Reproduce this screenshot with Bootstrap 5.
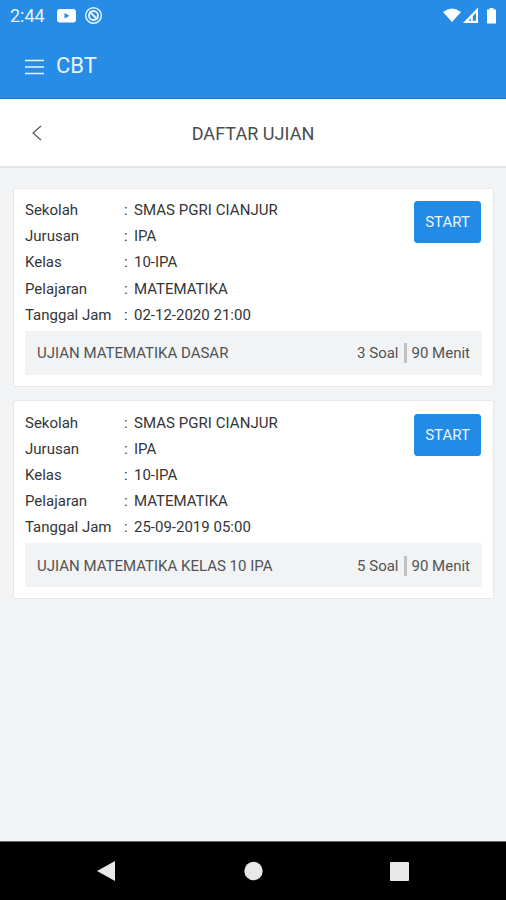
<!DOCTYPE html>
<html lang="id">
<head>
<meta charset="utf-8">
<meta name="viewport" content="width=device-width, initial-scale=1">
<title>CBT</title>
<link href="https://cdn.jsdelivr.net/npm/bootstrap@5.3.0/dist/css/bootstrap.min.css" rel="stylesheet">
<style>
body{font-family:Roboto,"Liberation Sans",sans-serif;font-size:15px;background:#f1f3f5;color:#343538}
svg{display:block;flex:none}
.app-top{background:#268ce6;height:99px;color:#e8f5ff;border-bottom:1px solid #1c78c9}
.status{height:31px;padding:0 8px 0 10px;font-size:18px}
.status-apps{margin-left:12px}
.brand-row{height:69px;padding:0 24px 0;font-size:22px;line-height:1}
.brand-text{margin-left:11px}
.title-bar{height:69px;border-bottom:2px solid #e3e4e5;padding:1px 30px 0}
.title-bar h1{font-size:18px;font-weight:400;color:#4b4c4e;letter-spacing:.05px;padding-top:1px}
.title-end{width:14px}
.exam-list{padding:19.500px 12px 0 13px;gap:13.500px}
.exam{border:1px solid #e6e8ea;border-radius:2px;height:199px;padding:8.500px 11px 0}
.exam-row{height:26.2px;line-height:27.2px}
.exam-label{width:99px}
.exam-sep{width:10px}
.exam-school{letter-spacing:.05px}
.btn-start{--bs-btn-bg:#228be6;--bs-btn-border-color:#228be6;--bs-btn-color:#e9f6ff;--bs-btn-hover-bg:#1c7ed6;--bs-btn-hover-color:#fff;width:67px;height:42px;font-size:15px;padding:1px 0 0;border-radius:3px;margin:4px 1px 0 0}
.exam-foot{height:44px;background:#f1f3f5;padding:1px 12px 0;margin-top:3px;color:#515355}
.bar{width:3px;height:20px;background:#bfc1c3;margin:0 5px}
.sysnav{height:59px;background:#000;border-top:1px solid #666}
</style>
</head>
<body>
<div class="d-flex flex-column vh-100 overflow-hidden">
  <header class="app-top flex-shrink-0">
    <div class="status d-flex align-items-center">
      <span>2:44</span>
      <svg class="ms-auto order-1" width="56" height="20" viewBox="0 0 56 20" fill="#fff"><path d="M1 6Q10-1 19 6L10 16Z"/><path fill-rule="evenodd" d="M21 17L36 1.500V17ZM26.500 14.800H29V12.200ZM30.800 14.800H34V7L30.800 10.300Z"/><path d="M45 3.500h2.500V2h4v1.500H54V17.500h-9z"/></svg>
      <svg class="status-apps" width="48" height="20" viewBox="0 0 48 20"><rect y="3" x="0" width="19" height="13.500" rx="3" fill="#fff"/><path d="M7.500 7v5.500l5-2.750z" fill="#268ce6"/><g fill="none" stroke="#e8f5ff"><circle cx="36.500" cy="9.500" r="7.800" stroke-width="1.500"/><circle cx="36.500" cy="9.500" r="4.500" stroke-width="1.900"/><path d="M32.500 5.500l8 8" stroke-width="2"/></g></svg>
    </div>
    <nav class="brand-row d-flex align-items-center">
      <svg width="21" height="18" viewBox="0 0 21 18" stroke="#e8f5ff" stroke-width="1.700"><path d="M1 3.500h19M1 10h19M1 16.500h19"/></svg>
      <span class="brand-text">CBT</span>
    </nav>
  </header>
  <div class="title-bar bg-white d-flex align-items-center flex-shrink-0">
    <svg width="14" height="18" viewBox="0 0 14 18" fill="none" stroke="#555" stroke-width="1.200"><path d="M11 2L3 9l8 7"/></svg>
    <h1 class="flex-grow-1 text-center mb-0">DAFTAR UJIAN</h1>
    <span class="title-end"></span>
  </div>
  <main class="exam-list d-flex flex-column flex-grow-1">
    <section class="exam bg-white">
      <div class="d-flex justify-content-between align-items-start">
        <div>
          <div class="exam-row d-flex"><span class="exam-label">Sekolah</span><span class="exam-sep">:</span><span class="exam-school">SMAS PGRI CIANJUR</span></div>
          <div class="exam-row d-flex"><span class="exam-label">Jurusan</span><span class="exam-sep">:</span><span>IPA</span></div>
          <div class="exam-row d-flex"><span class="exam-label">Kelas</span><span class="exam-sep">:</span><span>10-IPA</span></div>
          <div class="exam-row d-flex"><span class="exam-label">Pelajaran</span><span class="exam-sep">:</span><span>MATEMATIKA</span></div>
          <div class="exam-row d-flex"><span class="exam-label">Tanggal Jam</span><span class="exam-sep">:</span><span>02-12-2020 21:00</span></div>
        </div>
        <button class="btn btn-start" type="button">START</button>
      </div>
      <div class="exam-foot d-flex align-items-center"><span class="me-auto">UJIAN MATEMATIKA DASAR</span><span>3 Soal</span><span class="bar"></span><span>90 Menit</span></div>
    </section>
    <section class="exam bg-white">
      <div class="d-flex justify-content-between align-items-start">
        <div>
          <div class="exam-row d-flex"><span class="exam-label">Sekolah</span><span class="exam-sep">:</span><span class="exam-school">SMAS PGRI CIANJUR</span></div>
          <div class="exam-row d-flex"><span class="exam-label">Jurusan</span><span class="exam-sep">:</span><span>IPA</span></div>
          <div class="exam-row d-flex"><span class="exam-label">Kelas</span><span class="exam-sep">:</span><span>10-IPA</span></div>
          <div class="exam-row d-flex"><span class="exam-label">Pelajaran</span><span class="exam-sep">:</span><span>MATEMATIKA</span></div>
          <div class="exam-row d-flex"><span class="exam-label">Tanggal Jam</span><span class="exam-sep">:</span><span>25-09-2019 05:00</span></div>
        </div>
        <button class="btn btn-start" type="button">START</button>
      </div>
      <div class="exam-foot d-flex align-items-center"><span class="me-auto">UJIAN MATEMATIKA KELAS 10 IPA</span><span>5 Soal</span><span class="bar"></span><span>90 Menit</span></div>
    </section>
  </main>
  <footer class="sysnav flex-shrink-0">
    <svg width="506" height="58" viewBox="0 0 506 58" fill="#e8e8e8"><path d="M97 29L115 19V39Z"/><circle cx="253.500" cy="29" r="9.200"/><rect x="390" y="20" width="19" height="19" rx="1"/></svg>
  </footer>
</div>
<script src="https://cdn.jsdelivr.net/npm/bootstrap@5.3.0/dist/js/bootstrap.bundle.min.js"></script>
</body>
</html>
